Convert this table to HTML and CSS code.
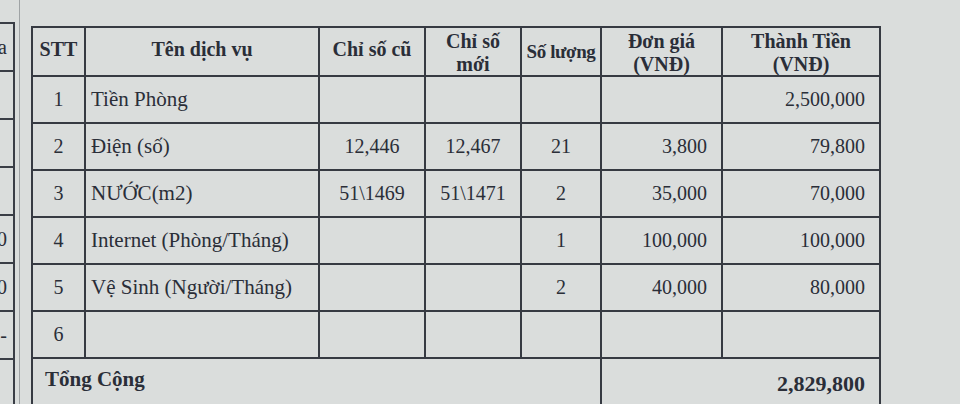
FILE: index.html
```html
<!DOCTYPE html>
<html lang="vi">
<head>
<meta charset="utf-8">
<title>Bảng tính tiền phòng</title>
<link rel="stylesheet" href="styles.css">
</head>
<body>
<div class="page">
  <div class="strip">
    <div class="sc">a</div>
    <div class="sc"></div>
    <div class="sc"></div>
    <div class="sc"></div>
    <div class="sc">0</div>
    <div class="sc">0</div>
    <div class="sc">-</div>
    <div class="sc"></div>
  </div>
  <div class="gridline"></div>
  <table class="bill">
    <colgroup>
      <col class="c-stt"><col class="c-name"><col class="c-old"><col class="c-new"><col class="c-qty"><col class="c-price"><col class="c-total">
    </colgroup>
    <thead>
      <tr>
        <th><div class="hd">STT</div></th>
        <th><div class="hd">Tên dịch vụ</div></th>
        <th><div class="hd">Chỉ số cũ</div></th>
        <th><div class="hd two">Chỉ số<br>mới</div></th>
        <th><div class="hd qty">Số lượng</div></th>
        <th><div class="hd two">Đơn giá<br>(VNĐ)</div></th>
        <th><div class="hd two">Thành Tiền<br>(VNĐ)</div></th>
      </tr>
    </thead>
    <tbody>
      <tr><td class="ctr">1</td><td class="name">Tiền Phòng</td><td></td><td></td><td></td><td></td><td class="num">2,500,000</td></tr>
      <tr><td class="ctr">2</td><td class="name">Điện (số)</td><td class="ctr sm">12,446</td><td class="ctr sm">12,467</td><td class="ctr">21</td><td class="num">3,800</td><td class="num">79,800</td></tr>
      <tr><td class="ctr">3</td><td class="name">NƯỚC(m2)</td><td class="ctr">51\1469</td><td class="ctr">51\1471</td><td class="ctr">2</td><td class="num">35,000</td><td class="num">70,000</td></tr>
      <tr><td class="ctr">4</td><td class="name">Internet (Phòng/Tháng)</td><td></td><td></td><td class="ctr">1</td><td class="num">100,000</td><td class="num">100,000</td></tr>
      <tr><td class="ctr">5</td><td class="name">Vệ Sinh (Người/Tháng)</td><td></td><td></td><td class="ctr">2</td><td class="num">40,000</td><td class="num">80,000</td></tr>
      <tr><td class="ctr">6</td><td class="name"></td><td></td><td></td><td></td><td></td><td></td></tr>
      <tr class="sum"><td colspan="5" class="name b">Tổng Cộng</td><td colspan="2" class="num b">2,829,800</td></tr>
    </tbody>
  </table>
</div>
</body>
</html>
```

FILE: styles.css
```css
html, body {
  margin: 0;
  padding: 0;
  background: #dadddc;
  overflow: hidden;
}
.page {
  display: flex;
  align-items: flex-start;
  width: 960px;
  height: 404px;
  overflow: hidden;
  font-family: "Liberation Serif", "Times New Roman", serif;
  color: #2a2e38;
}
.strip {
  width: 13px;
  margin-top: 22px;
  border-right: 2px solid #3a3e46;
  border-top: 2px solid #3a3e46;
  flex: none;
}
.sc {
  height: 46px;
  border-bottom: 2px solid #3a3e46;
  font-size: 20px;
  line-height: 46px;
  text-align: right;
  padding-right: 6px;
  overflow: hidden;
  direction: rtl;
  white-space: nowrap;
}
.gridline {
  flex: none;
  width: 1px;
  height: 404px;
  margin-left: 4px;
  background: #9fa3a5;
}
.bill {
  flex: none;
  margin-left: 11px;
  margin-top: 26px;
  border-collapse: collapse;
  table-layout: fixed;
  width: 848px;
}
.c-stt { width: 53px; }
.c-name { width: 234px; }
.c-old { width: 106px; }
.c-new { width: 96px; }
.c-qty { width: 80px; }
.c-price { width: 121px; }
.c-total { width: 158px; }
.bill th, .bill td {
  border: 2px solid #363a42;
  padding: 0;
}
.bill th {
  height: 47px;
  font-weight: bold;
  font-size: 20px;
}
.hd {
  height: 47px;
  display: flex;
  align-items: center;
  justify-content: center;
  text-align: center;
  line-height: 25px;
  padding-bottom: 4px;
  box-sizing: border-box;
  white-space: nowrap;
}
.hd.two {
  align-items: flex-start;
  line-height: 23px;
  padding: 2px 0 0 0;
}
.hd.qty {
  padding-bottom: 0;
  font-size: 19px;
  letter-spacing: -0.4px;
}
.bill td {
  height: 45px;
  font-size: 20px;
  white-space: nowrap;
  vertical-align: middle;
}
.ctr { text-align: center; }
.sm { font-size: 17px; }
.name { text-align: left; padding-left: 5px !important; font-size: 21px !important; }
.num { text-align: right; padding-right: 14px !important; }
.b { font-weight: bold; }
.sum td { height: 46px; }
.sum .name { vertical-align: top; padding-top: 8px !important; padding-left: 12px !important; }
.sum .num { padding-top: 12px !important; vertical-align: top; font-size: 22px !important; }
```
